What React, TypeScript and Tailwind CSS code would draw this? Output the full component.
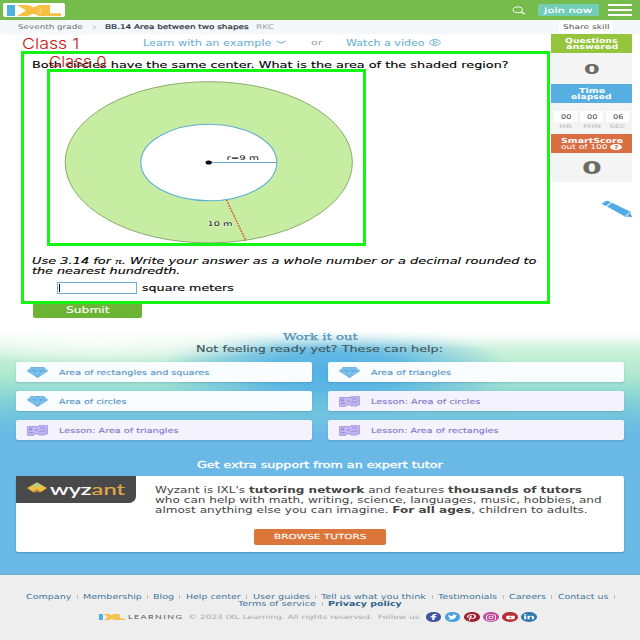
import React, { useLayoutEffect, useRef } from "react";
import { FaFacebookF, FaTwitter, FaPinterestP, FaInstagram, FaYoutube, FaLinkedinIn } from "react-icons/fa";

// Single line of text stretched to an exact width, optionally nudged down by dy.
function Fit({ w, dy = 0, className = "", children }: { w: number; dy?: number; className?: string; children: React.ReactNode }) {
  const ref = useRef<HTMLSpanElement>(null);
  useLayoutEffect(() => {
    const el = ref.current;
    if (el) el.style.transform = `translateY(${dy}px) scaleX(${w / el.offsetWidth})`;
  }, [w, dy]);
  return (
    <span className={`block shrink-0 whitespace-nowrap text-left ${className}`} style={{ width: w }}>
      <span ref={ref} className="inline-block origin-left whitespace-nowrap align-top">{children}</span>
    </span>
  );
}

function IxlLogo({ className }: { className: string }) {
  return (
    <svg viewBox="0 0 54 12" preserveAspectRatio="none" className={className}>
      <rect x="0" y="0" width="8" height="12" fill="#4fb0e2" />
      <path d="M10 0H21L26.500 2.500L32 0H43V9H54V12H32L26.500 9.500L21 12H10L19 6Z" fill="#f5c044" />
      <path d="M34 3.500V8.500M34 9.500L31 7.500" stroke="#fbe3a8" strokeWidth=".8" fill="none" />
    </svg>
  );
}

function Diamond() {
  return (
    <svg viewBox="0 0 21 11" className="h-[11px] w-[21px] shrink-0">
      <path d="M4 .5H17L20.500 4L10.500 10.500L.5 4Z" fill="#80c5f0" stroke="#5ba3d6" strokeWidth=".7" />
      <path d="M.5 4H20.500M4 .5L7 4L10.500 .5L14 4L17 .5M7 4L10.500 10.500L14 4" fill="none" stroke="#4b93c8" strokeWidth=".5" />
    </svg>
  );
}

function LessonIcon() {
  return (
    <svg viewBox="0 0 21 11" className="h-[11px] w-[21px] shrink-0">
      <path d="M.5 1.500H12V.6H20.500V9H18V10H12V9H7V10.400H.5Z" fill="#c4b5f3" stroke="#9a8cd8" strokeWidth=".7" />
      <path d="M2 5L3.500 2.500L5 5ZM2 7.500H6M8 5H11M13 3H18M12 7L14 5.500L16 7L19 5" fill="none" stroke="#8478cc" strokeWidth=".7" />
    </svg>
  );
}

function SkillCard({ label, w, lesson = false }: { label: string; w: number; lesson?: boolean }) {
  return (
    <div className={`flex h-5 items-center rounded-[2px] pl-[11px] shadow-[0_1px_2px_rgba(40,100,130,0.25)] ${lesson ? "bg-[#f3f2fd] text-[#8279c9]" : "bg-[#f9fdff] text-[#5594c6]"}`}>
      {lesson ? <LessonIcon /> : <Diamond />}
      <Fit w={w} dy={0.6} className="ml-[11px] text-[7px] leading-[10px] [-webkit-text-stroke:0.12px]">{label}</Fit>
    </div>
  );
}

function TimeCell({ value, unit, w }: { value: string; unit: string; w: number }) {
  return (
    <div className="flex w-[23px] flex-col items-center">
      <div className="flex h-[11px] w-full items-center justify-center bg-white text-[#444]">
        <Fit w={10} className="text-[6.500px] leading-[10px]">{value}</Fit>
      </div>
      <Fit w={w} className="mt-[1px] text-[5px] leading-[6px] font-bold text-[#ccc]">{unit}</Fit>
    </div>
  );
}

function Sidebar() {
  return (
    <aside className="ml-auto mr-2 flex w-[81px] flex-col text-white">
      <div className="flex h-[19px] flex-col items-center bg-[#95c53d] pt-[2.500px]">
        <Fit w={53} dy={0.6} className="text-[7px] leading-[7px] font-bold">Questions</Fit>
        <Fit w={52} className="text-[7px] leading-[7px] font-bold">answered</Fit>
      </div>
      <div className="flex h-[31px] items-center justify-center bg-[#f4f4f4] text-[#6b6b62]">
        <Fit w={15} className="text-[13.500px] leading-[14px] font-bold">0</Fit>
      </div>
      <div className="flex h-[19px] flex-col items-center bg-[#57aee0] pt-[2.500px]">
        <Fit w={26} dy={0.6} className="text-[7px] leading-[7px] font-bold">Time</Fit>
        <Fit w={41} className="text-[7px] leading-[7px] font-bold">elapsed</Fit>
      </div>
      <div className="flex h-[31px] justify-center gap-[3px] bg-[#f4f4f4] pt-2">
        <TimeCell value="00" unit="HR" w={13} />
        <TimeCell value="00" unit="MIN" w={18} />
        <TimeCell value="06" unit="SEC" w={17} />
      </div>
      <div className="flex h-[19px] flex-col items-center bg-[#d86f43] pt-[2.500px]">
        <Fit w={62} dy={0.6} className="text-[7px] leading-[7px] font-bold">SmartScore</Fit>
        <div className="flex items-center gap-[3px]">
          <Fit w={46} className="text-[6.500px] leading-[7px]">out of 100</Fit>
          <span className="flex h-[6.500px] w-[11.500px] items-center justify-center rounded-[50%] bg-white text-[#d86f43]">
            <Fit w={4.5} className="text-[5.500px] leading-[6px] font-bold">?</Fit>
          </span>
        </div>
      </div>
      <div className="flex h-[29px] items-center justify-center bg-[#f4f4f4] text-[#6b6b62]">
        <Fit w={20} className="text-[17px] leading-[18px] font-bold">0</Fit>
      </div>
      <svg viewBox="0 0 30 18" className="mt-[18px] ml-[51px] h-[18px] w-[30px]">
        <path d="M0 3.500L3 1.500Q5 .3 7 1.200L9 2.200L4 6L1 4.800Z" fill="#51aae5" />
        <path d="M5 6.500L10 2.700L28 11.500L22 16Z" fill="#51aae5" />
        <path d="M22 16L28 11.500L29.300 17Z" fill="#a8d0ec" stroke="#51aae5" strokeWidth=".6" />
        <path d="M26 16L29.500 17L28.500 14Z" fill="#4c8ab8" />
      </svg>
    </aside>
  );
}

function Figure() {
  return (
    <svg viewBox="64 80 290 165" className="ml-8 h-[165px] w-[290px]">
      <ellipse cx="208.800" cy="162.300" rx="143.600" ry="80.600" fill="#c6eda1" stroke="#8aab6c" strokeWidth="1" />
      <ellipse cx="208.800" cy="162.500" rx="68" ry="38.300" fill="#fff" stroke="#5eaed9" strokeWidth="1.100" />
      <path d="M209 162.500H277" stroke="#5a9fc9" strokeWidth=".9" />
      <ellipse cx="208.700" cy="162.500" rx="3.100" ry="2" fill="#000" />
      <path d="M226.500 200L246 241" stroke="#e0542c" strokeWidth="1.500" strokeDasharray="1.700 1.100" />
      <text x="226.500" y="160.300" fontSize="6.500" textLength="32.500" lengthAdjust="spacingAndGlyphs" fill="#111">r=9 m</text>
      <text x="207.500" y="226.300" fontSize="6.500" textLength="25" lengthAdjust="spacingAndGlyphs" fill="#111" stroke="#e6f7d5" strokeWidth="1" paintOrder="stroke">10 m</text>
    </svg>
  );
}

const footerLinks: [string, number, number][] = [
  ["Company", 45, 12], ["Membership", 58.5, 11.5], ["Blog", 20.5, 12], ["Help center", 55, 12],
  ["User guides", 56.5, 12], ["Tell us what you think", 105, 12], ["Testimonials", 59, 12],
  ["Careers", 37, 11.5], ["Contact us", 51, 12],
];

function Divider({ w }: { w: number }) {
  return (
    <span className="flex shrink-0 justify-center" style={{ width: w }}>
      <span className="mt-[2px] h-1 w-px bg-[#bbb]" />
    </span>
  );
}

const socials = [
  { Icon: FaFacebookF, bg: "bg-[#3f569f]", size: "h-[6px] w-[7px]" },
  { Icon: FaTwitter, bg: "bg-[#4a9fe0]", size: "h-[6px] w-[9px]" },
  { Icon: FaPinterestP, bg: "bg-[#9e2330]", size: "h-[7px] w-[9px]" },
  { Icon: FaInstagram, bg: "bg-[#bd4d9b]", size: "h-[7px] w-[10px]" },
  { Icon: FaYoutube, bg: "bg-[#b62f38]", size: "h-[5px] w-[9px]" },
  { Icon: FaLinkedinIn, bg: "bg-[#2e79ad]", size: "h-[6px] w-[10px]" },
];

export default function App() {
  return (
    <div className="relative flex h-[640px] w-[640px] flex-col overflow-hidden bg-white font-['DejaVu_Sans',sans-serif]">
      <header className="flex h-5 shrink-0 items-center bg-[#76bc4c] pl-[3px] pr-2">
        <div className="flex h-[14px] w-[62px] items-center justify-center rounded-[2px] bg-white">
          <IxlLogo className="h-[11px] w-[54px]" />
        </div>
        <svg viewBox="0 0 14 9" className="ml-auto mr-3 h-[9px] w-[14px]">
          <ellipse cx="5.800" cy="3.800" rx="4.700" ry="2.900" fill="none" stroke="#fff" strokeWidth="1" />
          <path d="M9 6L12.800 8" stroke="#fff" strokeWidth="1.300" />
        </svg>
        <div className="flex h-[12px] w-[61px] items-center justify-center rounded-[1px] bg-[#72cdb7] text-white">
          <Fit w={49} dy={0.6} className="text-[7.500px] leading-[10px] [-webkit-text-stroke:0.15px]">Join now</Fit>
        </div>
        <div className="ml-[9px] flex w-6 flex-col gap-[3px]">
          <span className="h-[2px] bg-white" /><span className="h-[2px] bg-white" /><span className="h-[2px] bg-white" />
        </div>
      </header>

      <nav className="flex h-[14px] shrink-0 items-center bg-[#f4f8fa] pl-[18px] pr-[27px] text-[6.500px] leading-[10px] text-[#667078]">
        <Fit w={65}>Seventh grade</Fit>
        <svg viewBox="0 0 6 5" className="mx-[8.500px] h-[5px] w-[5px]"><path d="M1 .3L5 2.500L1 4.700" fill="none" stroke="#aaa" strokeWidth=".8" /></svg>
        <Fit w={143} className="font-medium text-[#25313a] [-webkit-text-stroke:0.2px]">BB.14 Area between two shapes</Fit>
        <Fit w={18} className="ml-2 text-[#9a9fa3]">RKC</Fit>
        <div className="ml-auto flex h-[12px] items-center bg-white px-1"><Fit w={46} className="text-[#555]">Share skill</Fit></div>
      </nav>

      <div className="flex h-[284px] shrink-0">
        <main className="w-[551px]">
          <div className="flex h-[17px] items-center pl-[143px] text-[8px] leading-[10px] text-[#62abd3]">
            <Fit w={128} dy={0.6}>Learn with an example</Fit>
            <svg viewBox="0 0 10 4" className="-mt-[1px] ml-[5px] h-[4px] w-[10px]"><path d="M.5 .8Q5 5 9.500 .8" fill="none" stroke="#62abd3" strokeWidth="1" /></svg>
            <Fit w={11} className="ml-[25px] text-[7px] text-[#999]">or</Fit>
            <Fit w={79} dy={0.6} className="ml-[24px]">Watch a video</Fit>
            <svg viewBox="0 0 12 7" className="ml-[3.500px] h-[7px] w-[12px]">
              <ellipse cx="6" cy="3.500" rx="5.300" ry="2.900" fill="none" stroke="#62abd3" strokeWidth=".9" />
              <path d="M4.500 1.800L8.500 3.500L4.500 5.200Z" fill="none" stroke="#62abd3" strokeWidth=".8" />
            </svg>
          </div>
          <div className="pl-8 pt-[9px] text-[8.800px] leading-[10px] text-black [-webkit-text-stroke:0.12px]">
            <Fit w={477}>Both circles have the same center. What is the area of the shaded region?</Fit>
            <div className="pt-[10px]"><Figure /></div>
            <div className="pt-[11px] italic">
              <Fit w={505}>Use 3.14 for <span className="font-['Liberation_Serif',serif]">π</span>. Write your answer as a whole number or a decimal rounded to</Fit>
              <Fit w={148}>the nearest hundredth.</Fit>
            </div>
            <div className="mt-[6px] flex h-[12px] items-center pl-[25px]">
              <div className="flex h-[12px] w-[80px] items-center border border-[#6aaed4] bg-white pl-[1px]"><span className="h-2 w-px bg-black" /></div>
              <Fit w={92} className="ml-[5px]">square meters</Fit>
            </div>
          </div>
          <button className="ml-[33px] mt-[7px] flex h-[17px] w-[109px] items-center justify-center rounded-[2px] bg-[#6cb436] pt-[2px] text-white">
            <Fit w={43} className="text-[8px] leading-[10px] [-webkit-text-stroke:0.12px]">Submit</Fit>
          </button>
        </main>
        <Sidebar />
      </div>

      <section className="flex h-[257px] shrink-0 flex-col bg-[linear-gradient(180deg,#fff_0%,#fff_12px,rgba(255,255,255,0)_30px),radial-gradient(ellipse_180px_20px_at_100px_26px,rgba(255,255,255,0.75)_0%,rgba(255,255,255,0.5)_50%,rgba(255,255,255,0)_100%),radial-gradient(ellipse_180px_48px_at_335px_54px,#52b0e6_0%,rgba(87,179,230,0.9)_40%,rgba(95,180,225,0)_100%),linear-gradient(180deg,#fff_0px,#e0f6ea_18px,#c4efd6_38px,#aee8cf_58px,#83d2d7_82px,#72c2df_100px,#69b8e6_120px)]">
        <div className="flex flex-col items-center pt-[13px]">
          <Fit w={75} className="font-['DejaVu_Serif',serif] text-[9px] leading-[12px] text-[#5790b8] [-webkit-text-stroke:0.25px]">Work it out</Fit>
          <Fit w={247} className="-ml-px text-[9px] leading-[12px] text-[#43545c] [-webkit-text-stroke:0.12px]">Not feeling ready yet? These can help:</Fit>
        </div>
        <div className="mt-[7px] grid grid-cols-2 gap-x-4 gap-y-[9px] px-4">
          <SkillCard label="Area of rectangles and squares" w={150} />
          <SkillCard label="Area of triangles" w={80} />
          <SkillCard label="Area of circles" w={68} />
          <SkillCard label="Lesson: Area of circles" w={109} lesson />
          <SkillCard label="Lesson: Area of triangles" w={120} lesson />
          <SkillCard label="Lesson: Area of rectangles" w={128} lesson />
        </div>
        <div className="mt-[19px] flex justify-center text-white">
          <Fit w={246} className="text-[8.500px] leading-[12px] [-webkit-text-stroke:0.3px]">Get extra support from an expert tutor</Fit>
        </div>
        <div className="mx-4 mt-[5px] flex h-[76px] rounded-[2px] bg-white shadow-[0_1px_2px_rgba(30,80,120,0.35)]">
          <div className="flex h-[27px] w-[120px] items-center rounded-br-[7px] bg-[#494949] pl-[11px]">
            <svg viewBox="0 0 20 11" className="-mt-1 h-[11px] w-[20px]">
              <path d="M10 .5L20 6L14 10L10 7.500L6 10L0 6Z" fill="#edc040" />
              <path d="M10 .5L15 3.200L10 5.500L5 3.200Z" fill="#b6cf8d" />
              <path d="M6 10L10 7.500L14 10L12 10.500L10 9L8 10.500Z" fill="#d89a35" />
            </svg>
            <Fit w={75} className="ml-[3px] pb-px font-['Lato',sans-serif] text-[15.500px] leading-[14px] text-white [-webkit-text-stroke:0.2px]">wyz<span className="text-[#e0a748]">ant</span></Fit>
          </div>
          <div className="pl-[19px] pt-[9px] text-[8.500px] leading-[10px] text-[#444]">
            <Fit w={427}>Wyzant is IXL's <b>tutoring network</b> and features <b>thousands of tutors</b></Fit>
            <Fit w={446}>who can help with math, writing, science, languages, music, hobbies, and</Fit>
            <Fit w={432}>almost anything else you can imagine. <b>For all ages</b>, children to adults.</Fit>
            <button className="ml-[99px] mt-[14px] flex h-4 w-[132px] items-center justify-center rounded-[2px] bg-[#db753a] text-white">
              <Fit w={93} className="text-[7px] leading-[10px] [-webkit-text-stroke:0.12px]">BROWSE TUTORS</Fit>
            </button>
          </div>
        </div>
        <div className="mt-auto h-[2px] bg-[#72aed3]" />
      </section>

      <footer className="flex-1 bg-[#eee] pt-[18px] text-[7px] leading-[8px] text-[#41749a]">
        <div className="flex h-[8px] pl-[26px]">
          {footerLinks.map(([t, w, gap]) => (
            <React.Fragment key={t}>
              <Fit w={w}>{t}</Fit>
              <Divider w={gap} />
            </React.Fragment>
          ))}
        </div>
        <div className="-mt-[1px] flex h-[8px] pl-[238px]">
          <Fit w={78}>Terms of service</Fit>
          <Divider w={12} />
          <Fit w={74} className="font-bold text-[#2b618a]">Privacy policy</Fit>
        </div>
        <div className="mt-[4px] flex h-[10px] items-center pl-[99px] text-[6px] text-[#aaa]">
          <IxlLogo className="h-[6px] w-[26px]" />
          <Fit w={56} className="ml-[2.500px] font-['Lato',sans-serif] text-[6px] tracking-[1px] text-[#555]">LEARNING</Fit>
          <Fit w={185} className="ml-[4.500px]">© 2023 IXL Learning. All rights reserved.</Fit>
          <Fit w={42} className="ml-[5px]">Follow us</Fit>
          <div className="ml-[5.500px] flex gap-[3.500px]">
            {socials.map(({ Icon, bg, size }) => (
              <span key={bg} className={`flex h-[9.500px] w-[15.700px] items-center justify-center rounded-[50%] text-white ${bg}`}>
                <Icon preserveAspectRatio="none" className={size} />
              </span>
            ))}
          </div>
        </div>
      </footer>

      <div className="absolute left-[21px] top-[51px] h-[253px] w-[529px] border-[3px] border-[#14f514]" />
      <div className="absolute left-[47px] top-[69px] h-[177px] w-[319px] border-[3px] border-[#14f514]" />
      <div className="absolute left-[22px] top-[35px] font-['Inter',sans-serif] text-[15px] leading-[16px] font-light text-[#c81414]"><Fit w={57} dy={0.6}>Class 1</Fit></div>
      <div className="absolute left-[49px] top-[53px] font-['Inter',sans-serif] text-[15px] leading-[16px] font-light text-[#c81414]"><Fit w={58} dy={0.6}>Class 0</Fit></div>
    </div>
  );
}
